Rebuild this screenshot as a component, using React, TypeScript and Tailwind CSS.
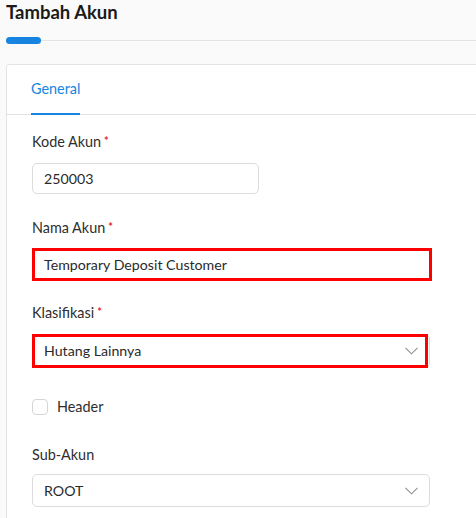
import React from "react";

const font = { fontFamily: "Lato, 'Noto Sans', sans-serif" };

function Chevron() {
  return (
    <svg width="13" height="8" viewBox="0 0 13 8" fill="none" className="shrink-0">
      <path d="M0.5 0.8 L6.5 6.8 L12.5 0.8" stroke="#8f8f8f" strokeWidth="1.1" />
    </svg>
  );
}

function Label({ text, required }: { text: string; required?: boolean }) {
  return (
    <div className="h-[20px] leading-[20px] text-[14.4px] text-[#2e2e2e] flex items-start">
      <span>{text}</span>
      {required && <span className="text-[11px] leading-[14px] font-bold text-[#e8262a] ml-[3px] mt-[2px]">*</span>}
    </div>
  );
}

export default function App() {
  return (
    <div style={font} className="w-[476px] h-[518px] overflow-hidden bg-[#fafafa]">
      <div className="pl-[6px] h-[24px] leading-[24px] text-[18.5px] font-bold text-[#1a1a1a]">Tambah Akun</div>
      <div className="mt-[13px] pl-[6px] flex items-center h-[7px]">
        <div className="w-[35px] h-[7px] rounded-full bg-[#1684e0]" />
        <div className="flex-1 h-px bg-[#e3e3e3]" />
      </div>
      <div className="mt-[20px] ml-[6px] w-[500px] h-[460px] bg-white border border-[#e3e3e3] rounded-tl-[3px]">
        <div className="h-[50px] border-b border-[#e3e3e3] pl-[24px] flex items-start">
          <div className="h-[50px] border-b-2 border-[#1684e0] flex items-center text-[14.4px] text-[#1684e0]">
            General
          </div>
        </div>
        <div className="pl-[25px] pt-[17px]">
          <Label text="Kode Akun" required />
          <div className="mt-[11px] w-[227px] h-[31px] border border-[#dcdcdc] rounded-[5px] pl-[11px] flex items-center text-[14.2px] text-[#2a2a2a]">
            250003
          </div>

          <div className="mt-[24px]">
            <Label text="Nama Akun" required />
          </div>
          <div className="mt-[10px] w-[400px] h-[33px] border-[3px] border-[#ff0000] pl-[9px] flex items-center text-[14.2px] text-[#2a2a2a]">
            Temporary Deposit Customer
          </div>

          <div className="mt-[22px]">
            <Label text="Klasifikasi" required />
          </div>
          <div className="mt-[11px] relative w-[398px] h-[34px] border border-[#dcdcdc] rounded-[5px] pl-[11px] pr-[11px] flex items-center justify-between text-[14.2px] text-[#2a2a2a]">
            <span>Hutang Lainnya</span>
            <Chevron />
            <div className="absolute -left-px -top-px w-[396px] h-[34px] border-[3px] border-[#ff0000]" />
          </div>

          <div className="mt-[29px] h-[20px] flex items-center">
            <div className="w-[16px] h-[16px] border border-[#d6d6d6] rounded-[4px] bg-white" />
            <span className="ml-[9px] text-[14.4px] leading-[20px] text-[#2e2e2e]">Header</span>
          </div>

          <div className="mt-[28px]">
            <Label text="Sub-Akun" />
          </div>
          <div className="mt-[9px] w-[398px] h-[33px] border border-[#dcdcdc] rounded-[5px] pl-[11px] pr-[11px] flex items-center justify-between text-[14.2px] text-[#2a2a2a]">
            <span>ROOT</span>
            <Chevron />
          </div>
        </div>
      </div>
    </div>
  );
}
